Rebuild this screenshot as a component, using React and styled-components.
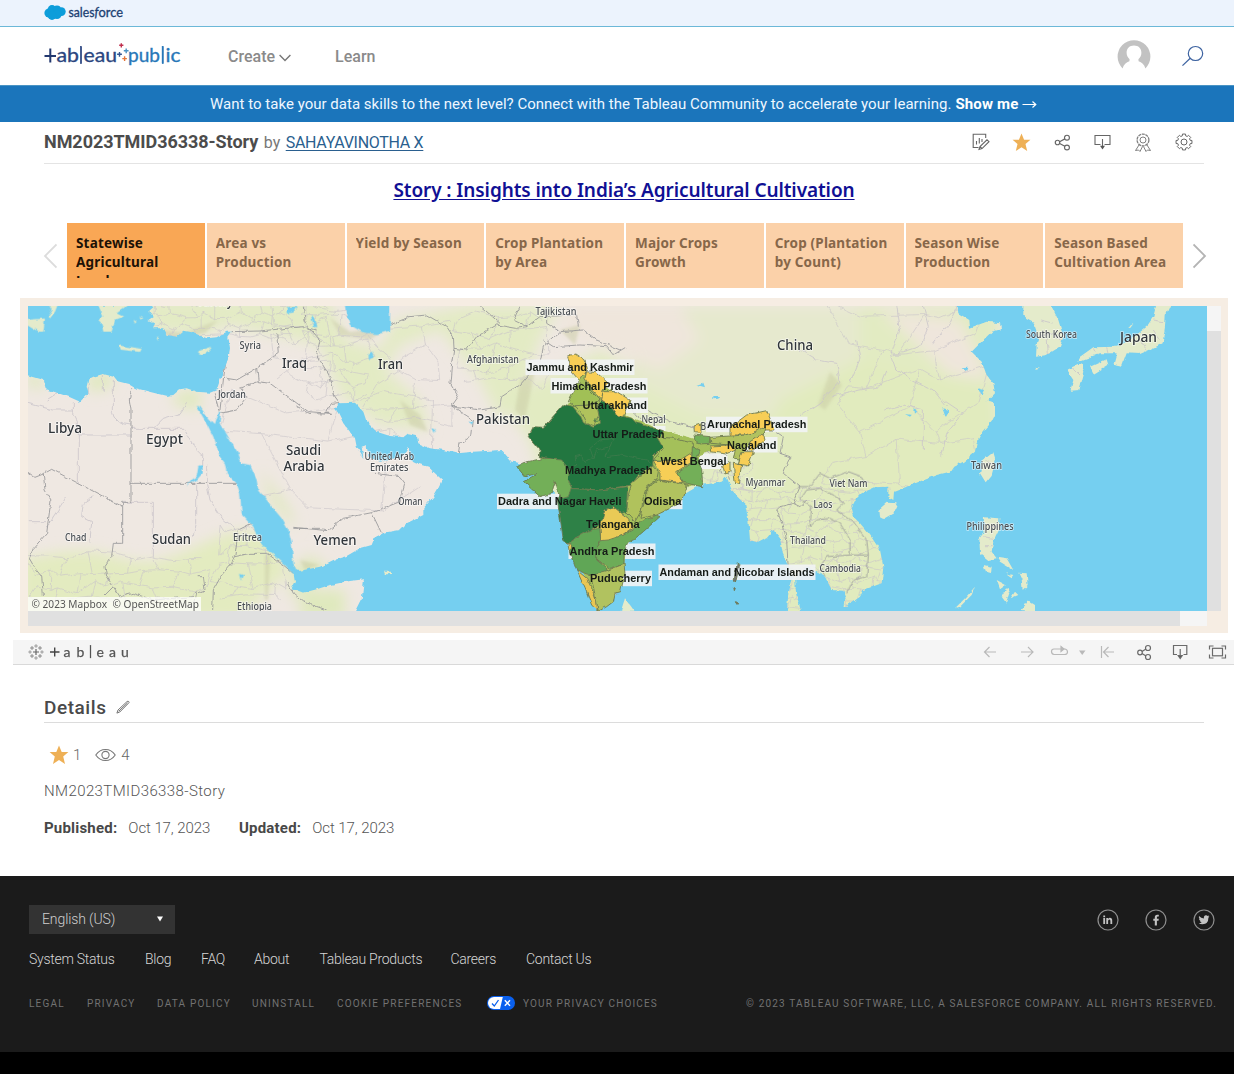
import React from 'react';
import styled, { createGlobalStyle } from 'styled-components';

const GlobalStyle = createGlobalStyle`
  *, *::before, *::after { box-sizing: border-box; }
  body { margin: 0; background: #fff; font-family: Roboto, "Liberation Sans", sans-serif; color: #666; }
  svg { display: block; flex: none; }
`;

const Page = styled.div`
  width: 1234px;
  height: 1074px;
  overflow: hidden;
  display: flex;
  flex-direction: column;
  white-space: nowrap;
`;

const BrandBar = styled.div`
  height: 27px;
  flex: none;
  padding: 0 0 0 44px;
  display: flex;
  align-items: center;
  background: #ecf3fd;
  border-bottom: 1px solid #6cb8d8;
`;

const NavBar = styled.header`
  height: 58px;
  flex: none;
  display: flex;
  align-items: center;
  padding: 0 30px 0 44px;
`;

const NavItem = styled.span`
  display: flex;
  align-items: center;
  gap: 4px;
  margin-left: ${(p) => p.$left}px;
  font-size: 16px;
  font-weight: 500;
  letter-spacing: ${(p) => p.$track || 0}px;
  color: #8a8a8a;
`;

const ChevronIcon = styled.svg`
  margin-top: 3px;
`;

const NavTools = styled.div`
  margin-left: auto;
  display: flex;
  align-items: center;
  gap: 31px;
`;

const Banner = styled.div`
  height: 37px;
  flex: none;
  display: flex;
  align-items: center;
  gap: 4px;
  padding: 0 0 1px 210px;
  background: #1b75bb;
  border-top: 1px solid #4a94c4;
  color: #eef7ff;
  font-size: 15px;
  letter-spacing: 0.02px;
  b { color: #fff; font-weight: 700; letter-spacing: 0.15px; }
`;

const TitleRow = styled.div`
  height: 42px;
  flex: none;
  margin: 0 30px 0 44px;
  border-bottom: 1px solid #e4e4e4;
  display: flex;
  align-items: center;
  justify-content: space-between;
  padding-bottom: 2px;
`;

const TitleText = styled.div`
  display: flex;
  align-items: baseline;
  gap: 5.500px;
  font-size: 16px;
  color: #777;
`;

const WorkbookName = styled.h1`
  margin: 0;
  font-size: 18px;
  font-weight: 700;
  color: #4c4c4c;
  letter-spacing: ${(p) => p.$track}px;
`;

const Author = styled.a`
  color: #2a5f8f;
  text-decoration: underline;
  text-underline-offset: 2px;
  letter-spacing: -0.3px;
`;

const Actions = styled.div`
  display: flex;
  align-items: center;
  margin-top: 1px;
`;

const Action = styled.span`
  width: 40.5px;
  display: flex;
  justify-content: center;
`;

const StoryTitle = styled.h2`
  margin: 0 0 0 14px;
  height: 59px;
  flex: none;
  display: flex;
  align-items: center;
  justify-content: center;
  padding-bottom: 7px;
  font: 600 19px "Noto Sans", "Open Sans", sans-serif;
  color: #101094;
  span { text-decoration: underline; text-underline-offset: 2px; letter-spacing: ${(p) => p.$track}px; }
`;

const StoryNav = styled.div`
  height: 65px;
  flex: none;
  padding: 0 27px 0 43px;
  display: flex;
  align-items: center;
  justify-content: space-between;
`;

const Points = styled.div`
  width: 1116px;
  height: 65px;
  display: grid;
  grid-template-columns: repeat(8, 1fr);
  gap: 2px;
`;

const Point = styled.div`
  height: 65px;
  padding: 11px 0 0 9px;
  overflow: hidden;
  background: ${(p) => (p.$active ? '#f9a755' : '#fbd1a9')};
  color: ${(p) => (p.$active ? '#1d1206' : '#876749')};
  font: 700 13.5px/19px "Noto Sans", "Open Sans", sans-serif;
  letter-spacing: ${(p) => p.$track}px;
`;

const PointText = styled.div`
  height: 44px;
  overflow: hidden;
`;

const VizFrame = styled.div`
  margin: 10px 6px 0 20px;
  height: 335px;
  flex: none;
  padding: 8px;
  background: #f6ede3;
  display: grid;
  grid-template-columns: 1179px 14px;
  grid-template-rows: 305px 15px;
`;

const ScrollTrack = styled.div`
  background: #f5f5f5;
  display: flex;
  flex-direction: ${(p) => (p.$vertical ? 'column' : 'row')};
  justify-content: ${(p) => (p.$vertical ? 'flex-end' : 'flex-start')};
`;

const ScrollThumb = styled.div`
  background: #e0e0e0;
  width: ${(p) => p.$w};
  height: ${(p) => p.$h};
`;

const VizToolbar = styled.div`
  margin: 7px 0 0 13px;
  height: 25px;
  flex: none;
  background: #f5f5f5;
  border-bottom: 1px solid #d9d9d9;
  display: flex;
  align-items: center;
  justify-content: space-between;
  padding: 0 6px 0 15px;
`;

const ToolIcons = styled.div`
  display: flex;
  align-items: center;
`;

const Details = styled.section`
  height: 211px;
  flex: none;
  margin: 0 30px 0 44px;
  padding-top: 28px;
`;

const DetailsHead = styled.div`
  height: 30px;
  padding-bottom: 1px;
  border-bottom: 1px solid #dcdcdc;
  display: flex;
  align-items: center;
  gap: 10px;
  color: #4a4a4a;
  font-size: 19px;
  font-weight: 500;
  letter-spacing: 0.55px;
`;

const Stats = styled.div`
  height: 64px;
  display: flex;
  align-items: center;
  padding-left: 5px;
  font-size: 15px;
  font-weight: 300;
  color: #666;
`;

const StatValue = styled.span`
  margin: 0 ${(p) => p.$after || 0}px 0 ${(p) => p.$before}px;
`;

const Description = styled.div`
  height: 20px;
  margin-top: -6px;
  line-height: 20px;
  font-size: 15px;
  font-weight: 300;
  letter-spacing: 0.4px;
  color: #555;
`;

const Dates = styled.div`
  margin-top: 17px;
  height: 20px;
  line-height: 20px;
  display: flex;
  font-size: 15px;
  font-weight: 300;
  letter-spacing: -0.08px;
  color: #555;
  b { font-weight: 700; color: #484848; margin-right: 11px; letter-spacing: 0.2px; }
`;

const DateItem = styled.span`
  width: ${(p) => p.$w}px;
`;

const Footer = styled.footer`
  height: 176px;
  flex: none;
  background: #1b1b1b;
  padding: 29px 17px 0 29px;
  color: #c4c4c4;
`;

const BottomStrip = styled.div`
  flex: 1;
  background: #000;
`;

const FooterTop = styled.div`
  display: flex;
  justify-content: space-between;
  align-items: center;
  padding-right: 2px;
`;

const Language = styled.div`
  width: 146px;
  height: 29px;
  background: #333;
  display: flex;
  align-items: center;
  justify-content: space-between;
  padding: 0 12px 1px 13px;
  font-size: 14px;
  font-weight: 300;
  letter-spacing: -0.1px;
  color: #cfcfcf;
`;

const Social = styled.div`
  display: flex;
  gap: 26px;
`;

const FooterLinks = styled.nav`
  display: flex;
  height: 50px;
  align-items: center;
  font-size: 14px;
  font-weight: 300;
  color: #d6d6d6;
`;

const FooterLink = styled.a`
  width: ${(p) => p.$w}px;
  flex: none;
  letter-spacing: ${(p) => p.$track || 0}px;
`;

const LegalRow = styled.div`
  display: flex;
  height: 38px;
  align-items: center;
  font-size: 10px;
  letter-spacing: 1.15px;
  color: #727272;
`;

const Copyright = styled.span`
  margin-left: auto;
  letter-spacing: ${(p) => p.$track}px;
`;

/* ---------- icons ---------- */

const SalesforceLogo = () => (
  <svg width="80" height="18" viewBox="0 0 80 18">
    <g fill="#0d9dda">
      <circle cx="5" cy="9" r="4.6" /><circle cx="8" cy="5.5" r="4.4" /><circle cx="13" cy="5.4" r="4" />
      <circle cx="17.4" cy="7.6" r="4.3" /><circle cx="13" cy="10.5" r="4.6" /><circle cx="8" cy="11.5" r="4.4" />
    </g>
    <g fontSize="12.5" fontFamily="Lato, sans-serif" fill="#1b3f72" stroke="#1b3f72" strokeWidth=".3">
      <text x="24.5" y="12.6" textLength="26" lengthAdjust="spacingAndGlyphs">sales</text>
      <text x="50.5" y="12.6" fontStyle="italic">f</text>
      <text x="54.5" y="12.6" textLength="24.5" lengthAdjust="spacingAndGlyphs">orce</text>
    </g>
  </svg>
);

const PlusMark = ({ x, y, r, c, w = 1.2 }) => (
  <path d={`M${x - r} ${y}H${x + r}M${x} ${y - r}V${y + r}`} stroke={c} strokeWidth={w} fill="none" />
);

const TableauPublicLogo = () => (
  <svg width="138" height="28" viewBox="44 42 138 28" fontFamily="Lato, sans-serif" fontSize="20">
    <path d="M44.5 56H56M50.3 48.5V62.5" stroke="#22386f" strokeWidth="2" fill="none" />
    <g fill="#2b4680" stroke="#2b4680" strokeWidth=".35">
      <text x="56.5" y="62.4" textLength="22.500" lengthAdjust="spacingAndGlyphs">ab</text>
      <rect x="80.2" y="46.3" width="1.6" height="17.5" />
      <text x="83.5" y="62.4" textLength="33.500" lengthAdjust="spacingAndGlyphs">eau</text>
    </g>
    <PlusMark x={119.5} y={54.3} r={2.4} c="#33548f" w={1.4} />
    <PlusMark x={121.3} y={45.3} r={2.1} c="#c0304f" w={1.4} />
    <PlusMark x={126.2} y={50.8} r={2.4} c="#4d93c4" w={1.4} />
    <PlusMark x={124.6} y={58.6} r={2.3} c="#e4763a" w={1.4} />
    <g fill="#2877b8" stroke="#2877b8" strokeWidth=".35">
      <text x="128" y="62.4" textLength="32" lengthAdjust="spacingAndGlyphs">pub</text>
      <rect x="162" y="46.3" width="1.6" height="17.5" />
      <text x="165.500" y="62.4" textLength="15" lengthAdjust="spacingAndGlyphs">ic</text>
    </g>
  </svg>
);

const Chevron = () => (
  <ChevronIcon width="12" height="8" viewBox="0 0 12 8"><path d="M.6 1L6 6.6 11.4 1" fill="none" stroke="#777" strokeWidth="1.4" /></ChevronIcon>
);

const Avatar = () => (
  <svg width="34" height="34" viewBox="0 0 34 34">
    <path d="M5.6 29.4A16.4 16.4 0 1 1 28.4 29.4C27.4 25.6 24.6 23.2 21.6 22.2 L21.4 20.2C23.4 18.6 24.4 16.4 24.4 13.8 24.4 9.4 21.4 6.6 17 6.6S9.600 9.4 9.600 13.800C9.600 16.4 10.600 18.6 12.6 20.2L12.400 22.2C9.4 23.2 6.600 25.600 5.600 29.400Z" fill="#c2c2c2" />
  </svg>
);

const SearchIcon = () => (
  <svg width="22" height="22" viewBox="0 0 22 22"><g fill="none" stroke="#3c62a0" strokeWidth="1.2"><ellipse cx="13.500" cy="8.5" rx="7.2" ry="7" /><path d="M8.200 13.300L.5 20.600" /></g></svg>
);

const EditChartIcon = () => (
  <svg width="18" height="18" viewBox="0 0 18 18" fill="none" stroke="#666" strokeWidth="1.1">
    <path d="M13.700 5V1.200H1.200V14.500H6.500M4.500 8V11.500M7.300 5V10.500M10 6V9" />
    <path d="M7 16.500L8 13.500 15 6.800 17 8.700 10 15.600Z M8 13.500L10 15.600" />
  </svg>
);

const StarIcon = ({ size }) => (
  <svg width={size} height={size} viewBox="0 0 20 20"><path d="M10 .6L12.700 7H19.400L14.200 11.500 16 19 10 14.900 4 19 5.800 11.500.6 7H7.300Z" fill="#eeb056" /></svg>
);

const ShareIcon = ({ size = 16, c = '#666' }) => (
  <svg width={size} height={size} viewBox="0 0 16 16" fill="none" stroke={c} strokeWidth="1.100">
    <circle cx="3.300" cy="8" r="2.100" /><circle cx="12.200" cy="3.500" r="2.300" /><circle cx="12.200" cy="12.700" r="2.300" />
    <path d="M5.300 7.200L10.200 4.600M5.300 8.900L10.200 11.600" />
  </svg>
);

const DownloadIcon = () => (
  <svg width="17" height="17" viewBox="0 0 17 17"><path d="M6.500 10.500H1V1.500H16V10.500H10.500M8.500 5V13" fill="none" stroke="#666" strokeWidth="1.100" /><path d="M6 11.800H11L8.500 15.400Z" fill="#555" /></svg>
);

const AwardIcon = () => (
  <svg width="18" height="19" viewBox="0 0 18 19" fill="none" stroke="#808080" strokeWidth="1">
    <circle cx="9" cy="7" r="3" /><circle cx="9" cy="7" r="5.900" strokeWidth="1.300" strokeDasharray="3 .7" />
    <path d="M5 12L1.500 17.500 4.500 17 6 18.500 8.500 13.500M13 12L16.500 17.500 13.500 17 12 18.500 9.500 13.500" />
  </svg>
);

const gearPath = (() => {
  const pts = [];
  for (let i = 0; i < 8; i += 1) {
    const a = (i * Math.PI) / 4 - Math.PI / 2;
    [[-0.26, 6.4], [-0.19, 8.1], [0.19, 8.1], [0.26, 6.4]].forEach(([d, r]) => {
      pts.push(`${(9 + r * Math.cos(a + d)).toFixed(2)} ${(9 + r * Math.sin(a + d)).toFixed(2)}`);
    });
  }
  return `M${pts.join('L')}Z`;
})();

const GearIcon = () => (
  <svg width="18" height="18" viewBox="0 0 18 18" fill="none" stroke="#666" strokeWidth="1"><path d={gearPath} strokeLinejoin="round" /><circle cx="9" cy="9" r="3" /></svg>
);

const ArrowSide = ({ right }) => (
  <svg width="14" height="26" viewBox="0 0 14 26"><path d={right ? 'M.5 1.500L12 13 .5 24.500' : 'M13.500 1.500L2 13 13.500 24.500'} fill="none" stroke={right ? '#b4b4b4' : '#dcdcdc'} strokeWidth="1.800" /></svg>
);

const TableauMark = () => (
  <svg width="104" height="18" viewBox="28 643 104 18" fontFamily="Lato, sans-serif" fontSize="14" fill="#555">
    <PlusMark x={36} y={652} r={3} c="#666" w={1.2} />
    <PlusMark x={36} y={646} r={1.800} c="#999" w={1} />
    <PlusMark x={36} y={658} r={1.800} c="#999" w={1} />
    <PlusMark x={30} y={652} r={1.700} c="#999" w={1} />
    <PlusMark x={42} y={652} r={1.700} c="#999" w={1} />
    <PlusMark x={32} y={648} r={1.900} c="#888" w={1} />
    <PlusMark x={40} y={648} r={1.900} c="#888" w={1} />
    <PlusMark x={32} y={656} r={1.900} c="#888" w={1} />
    <PlusMark x={40} y={656} r={1.900} c="#888" w={1} />
    <path d="M50 652H59.500M54.700 647.500V656.500" stroke="#444" strokeWidth="1.400" />
    <g stroke="#555" strokeWidth=".25">
      <text x="63.500" y="656.500">a</text><text x="76.500" y="656.500">b</text>
      <rect x="90" y="645.500" width="1" height="12.500" />
      <text x="96.500" y="656.500">e</text><text x="109" y="656.500">a</text><text x="121" y="656.500">u</text>
    </g>
  </svg>
);

const VizTools = () => (
  <svg width="246" height="22" viewBox="982 641 246 22" fill="none" stroke="#b9b9b9" strokeWidth="1.200">
    <path d="M996 652H984.500M989.500 647L984.500 652 989.500 657" />
    <path d="M1021 652H1033M1028 647L1033 652 1028 657" />
    <path d="M1064 649H1054Q1051.500 649 1051.500 651.500T1054 654.500H1064.500Q1067.500 654.500 1067.500 652T1065 649H1061" />
    <path d="M1061 646.500V651.500L1064 649Z" fill="#b9b9b9" />
    <path d="M1079 650.500H1085.500L1082.200 655Z" fill="#b9b9b9" stroke="none" />
    <path d="M1101.500 646V658M1114 652H1103.500M1108.500 647L1103.500 652 1108.500 657" />
    <g stroke="#6a6a6a">
      <circle cx="1140" cy="652.500" r="2.300" /><circle cx="1148" cy="648" r="2.500" /><circle cx="1148" cy="657" r="2.500" /><path d="M1142 651.500L1146 649M1142 653.500L1146 656" />
      <path d="M1177 654.500H1173.500V645.500H1186.800V654.500H1183.500M1180.200 649V657" /><path d="M1178.200 655.500H1182.200L1180.200 658.500Z" fill="#555" />
      <rect x="1212.500" y="648.300" width="10" height="7.500" />
      <path d="M1209.500 649.500V646H1213.500M1221.500 646H1225.500V649.500M1225.500 654.500V658H1221.500M1213.500 658H1209.500V654.500" />
    </g>
  </svg>
);

const PencilIcon = () => (
  <svg width="14" height="14" viewBox="0 0 14 14" fill="none" stroke="#777" strokeWidth="1"><path d="M.9 13.100L2 10 11 1.600Q12 .8 12.800 1.600T12.500 3.200L3.800 12ZM2.800 11.200L11.600 2.800" /></svg>
);

const EyeIcon = () => (
  <svg width="21" height="14" viewBox="0 0 21 14" fill="none" stroke="#777" strokeWidth="1.100"><path d="M.8 7Q4.500 1.500 10.500 1.500T20.200 7Q16.500 12.500 10.500 12.500T.8 7Z" /><circle cx="10.500" cy="7" r="3.600" /></svg>
);

const PrivacyIcon = () => (
  <svg width="28" height="14" viewBox="0 0 28 14">
    <rect width="28" height="14" rx="7" fill="#0a60ee" />
    <path d="M7 1H15.800L13 13H7A6 6 0 0 1 7 1Z" fill="#fff" />
    <path d="M5 7.500L7.300 10 11.500 4" fill="none" stroke="#0a60ee" strokeWidth="1.300" />
    <path d="M17.800 4.300L23 9.800M23 4.300L17.800 9.800" stroke="#fff" strokeWidth="1.400" />
  </svg>
);

const Ring = ({ children }) => (
  <svg width="22" height="22" viewBox="0 0 22 22"><circle cx="11" cy="11" r="10" fill="none" stroke="#8f8f8f" strokeWidth="1.200" /><g fill="#c2c2c2">{children}</g></svg>
);

/* ---------- map ---------- */

// Irregular brick lattice used for administrative subdivisions.
const lattice = (x0, y0, x1, y1, step, seed) => {
  const rnd = (i, j, k) => {
    const v = Math.sin(i * 127.1 + j * 311.7 + k * 74.7 + seed * 13.3) * 43758.5453;
    return v - Math.floor(v) - 0.5;
  };
  const at = (i, j) => [x0 + i * step + rnd(i, j, 1) * step * 0.85, y0 + j * step + rnd(i, j, 2) * step * 0.85];
  const nx = Math.floor((x1 - x0) / step);
  const ny = Math.floor((y1 - y0) / step);
  let d = '';
  for (let j = 0; j <= ny; j += 1) {
    for (let i = 0; i <= nx; i += 1) {
      const p = at(i, j).map((v) => v.toFixed(1)).join(' ');
      if (i < nx) d += `M${p}L${at(i + 1, j).map((v) => v.toFixed(1)).join(' ')}`;
      if (j < ny && (i + j) % 2 === 0) d += `M${p}L${at(i, j + 1).map((v) => v.toFixed(1)).join(' ')}`;
    }
  }
  return d;
};

const WEST = 'translate(20 300) scale(.33333)';
const MIDDLE = 'translate(300 300) scale(.33333)';
const INDIA = 'translate(500 340) scale(.33333)';
const EAST = 'translate(800 300) scale(.33333)';

const greens = [
  ['#e3ebc4', 'M145 300H330L345 340 380 350 395 320 470 306H560L540 340 520 400 500 420 480 380 440 330 400 345 385 370 420 400 430 430 380 425 340 395 320 345 230 325 200 336 150 330Z'],
  ['#e3ebc0', 'M20 560Q80 545 110 555T160 560 210 540 270 535L290 570 240 620H20Z'],
  ['#e2ebc2', 'M500 400L560 370 600 350 690 400 780 370 850 306H1000V480L900 500 890 620 760 620 700 520H640L560 540 530 440Z'],
  ['#e6e9ce', 'M640 306H860V420L700 415 630 380Z'],
  ['#e1ebbe', 'M780 400L860 360 990 390 1000 470 880 520 890 640H750L740 500Z'],
  ['#dfe9bd', 'M292 570L310 555 330 570 290 600ZM300 590H345V620H300ZM28 370L45 380 40 390 28 385ZM85 375L115 372 110 388 90 392ZM172 395L200 388 200 410 175 405ZM260 470L290 510 296 530 270 500Z'],
  ['#efe6dc', 'M570 306H680L700 340 660 370 600 345 560 330ZM880 310L960 320 990 380 950 375Z'],
];

const provinces = [
  lattice(150, 304, 300, 340, 11, 1), lattice(305, 306, 372, 400, 13, 2),
  lattice(372, 330, 450, 440, 24, 9), lattice(30, 555, 215, 612, 16, 3),
  lattice(215, 530, 290, 612, 18, 4), lattice(460, 315, 560, 385, 17, 5),
  lattice(740, 490, 890, 625, 10, 6), lattice(715, 450, 760, 520, 13, 10),
  lattice(835, 306, 1010, 500, 37, 7), lattice(270, 300, 345, 395, 20, 12),
  lattice(235, 400, 440, 530, 46, 11), lattice(660, 455, 730, 490, 12, 8),
];

const westProvinces = 'M280 240V340Q285 372 333 375M175 550V405H333M160 310V335L175 365V405M24 310L100 330 160 330M335 385H490L520 440 545 465V500M400 385L430 355 480 340 500 310M560 495V550L570 600 610 660 650 690M530 550V670L520 710M400 607V770M308 607H400M220 590L190 610 185 650 215 665 210 725M24 665H78M140 590L80 680M205 250V280M250 225V275M105 250L110 280 80 300';
const eastProvinces = 'M290 17L300 80 275 165 290 210 340 240 400 270 440 320M370 20L385 80 360 140 280 165M170 120L180 180 150 250M470 20L440 80 400 130M100 290L180 270 240 260 260 210M250 330L310 315 370 330 370 450M430 300L490 340 440 400 425 470M0 150L50 180 110 190 120 240 60 310 0 350';

const westBorders = 'M335 265L328 300 333 330V607H308V620L95 508 70 522 45 532 24 517M70 522L75 570 93 600 80 700 40 745 28 775 45 805 65 830 70 885M308 620V730H280L275 770 255 800 260 830 280 860 250 890M333 550H652M695 670L655 690 645 765 635 790 605 825 580 870 578 930M645 770L690 760 740 760 790 795 820 820M805 850L820 880 850 905 920 930M520 930L530 880 555 870 550 830 530 830M280 860L300 890 340 880 400 900 520 890M635 95L720 93 800 85 850 80 890 90M770 100L775 160 710 205 650 240 620 235M710 205L715 245 660 265 680 290 650 330 600 340M715 245L750 250 865 335 930 340M620 165L610 240 600 330M583 280L598 335M820 685L900 685';
const middleBorders = 'M10 17L15 60 25 80 60 120 50 165 90 230 105 290 120 310M-10 320L25 340 95 343 75 340 95 310 115 308M270 75L330 50 380 45 440 80 460 110 462 145 500 150 530 110 590 75 650 85 680 80M462 145L455 190 450 250 475 290 455 318 520 360 515 405 480 430 475 460M455 318L540 330 600 320 605 290 660 255 690 220 720 190 730 140 780 95 850 90 890 120 960 150M740 20V70L780 95M680 80L640 60 660 20M680 80L720 50 830 45 835 80M-20 682L85 692 130 655 215 638 245 700M215 638L300 605 315 550 300 530 225 520M540 17L600 70';
const indiaBorders = 'M390 185L450 215 510 245 580 260 620 255M395 210L470 290 580 300M820 270L850 290 840 340 870 350 850 400 900 440 880 490 840 500 830 510 850 560 860 600 865 690 880 710M130 0L160 20 240 15 320 20 340 45 380 20M605 330L650 350 665 400M665 345L690 420M880 490L900 500 920 480';
const eastBorders = 'M-10 560L30 560 60 520 90 535 145 515 185 530 200 560M0 600L20 570 60 565 110 590 130 610 110 630 160 665 200 720 205 765 150 765V720L120 670 90 655 50 660 30 680 35 620 5 600M150 765L80 770 60 800 75 830M205 765L200 830 160 840 140 880';

const relief = ['M150 328L185 333 218 320 205 333 175 340ZM330 318L350 332 390 325 370 340 340 335Z', 'M830 372L842 385 825 410 818 405Z', 'M400 400L420 415 428 432 410 425ZM520 380L535 370 525 420 515 410ZM560 330L580 325 575 345Z', 'M265 555V600L268 600 270 555ZM300 560L320 565 305 570Z'];

const seas = [
  [WEST, 'M20 12H385L400 25 388 35 400 50 385 60 405 70 400 85 430 85 440 105 470 110 490 92 520 98 560 115 590 112 620 95 635 95 625 110 630 145 625 175 610 215 600 240 590 270 570 278 530 275 500 265 480 268 460 285 440 288 400 278 345 264 325 252 290 243 280 230 250 222 220 230 205 238 200 260 205 280 180 305 150 292 80 268 72 240 20 225Z'],
  [WEST, 'M530 318L540 320 565 355 585 375 600 370 610 385 630 420 655 460 665 490 690 495 710 540 715 570 740 600 760 625 785 655 805 690 815 730 820 790 832 815 820 822 790 790 760 765 735 745 715 720 700 680 665 640 660 580 650 550 620 520 615 490 600 470 580 410 560 370 545 345ZM585 375L597 335H603L598 372ZM500 560L515 540 530 530 535 500 548 498V520L530 540 510 550ZM660 822L672 825 665 842ZM800 25L830 20 820 38 800 40ZM872 45L885 55 892 80 882 82Z'],
  [MIDDLE, 'M-20 812L0 812 60 800 100 780 140 768 180 745 215 735 225 710 250 698 300 690 320 670 370 645V625L400 590 415 565 427 540 400 515 385 500 350 490 330 480V440L320 455 300 475 240 485 205 470 200 435 185 440 190 475 170 440 165 415 130 370 115 340 105 325 120 310 165 308 190 335 200 365 230 395 270 408 310 412 325 400 350 405 355 430 390 445 430 450 470 460 520 455 605 450 635 485 655 488 700 500 780 600 810 720 840 790 900 940H165L185 900 192 838 150 843 90 855 50 868 10 878 -25 865 -15 845Z'],
  [MIDDLE, 'M133 10H270V92L235 102 190 98 150 75 140 50ZM205 165L215 158 222 172 208 178ZM505 362L520 365 515 374ZM395 385L408 388 400 398Z'],
  [INDIA, 'M290 822L350 760 365 680 390 600 470 530 540 470 600 435 640 430 665 425 680 410 695 450 735 490 745 540 750 600 775 608 800 595 820 570 840 595 848 640 865 680 880 710 865 760 860 822ZM592 135L610 128 615 142ZM640 168L660 168 655 176 640 178Z'],
  [EAST, 'M5 940L-12 880 -15 830 20 800 75 830 85 850 95 870 130 872 140 895 130 920 145 915 180 890 190 870 245 850 250 800 240 750 210 705 180 670 160 650 152 625 165 600 185 580 225 562 265 560 265 590 280 600 282 575 320 560 370 540 410 525 450 515 460 500 490 485 525 455 530 430 550 395 575 365 585 345V310L560 305 585 280 580 250 560 225 545 185 515 155 540 130 575 95 603 88 600 70 560 65 510 83 508 60 475 40 472 10H1230V940ZM485 205L505 203 500 216ZM535 265L552 270 545 284ZM427 325L445 330 438 355ZM315 342L335 345 330 350ZM343 325L353 330 345 345Z'],
];

const islands = [
  [WEST, 'M20 60L75 55 70 95 58 95 20 72ZM88 17H112L105 35 90 55 84 48 95 30ZM235 17H320L290 40 310 50 285 60 275 95 250 95 245 70 235 60 250 50ZM298 136L365 147 360 156 302 149ZM530 155L577 140 565 155 540 165ZM410 115L418 108 414 122ZM340 60L350 65 345 70ZM360 48L370 55 360 58Z'],
  [MIDDLE, 'M255 815L276 815 276 822 258 823Z'],
  [INDIA, 'M375 775L405 815H362Z'],
  [EAST, 'M670 10H750L775 60 790 110 780 140 740 165 708 170 710 135 715 110 700 65 680 55 670 45ZM1070 10H1113L1097 45 1095 80 1088 130 1060 145 1020 162 980 160 965 200 940 195 950 160 900 160 832 185 840 170 880 142 950 140 990 120 1040 80 1060 50ZM870 200L920 178 925 195 880 222ZM800 210L845 190 853 215 838 270 812 272 820 240ZM580 457L587 480 575 525 557 547 540 520 550 480ZM235 630L260 608 293 610 280 640 250 657 237 650ZM552 652L598 655 597 690 580 725 575 755 590 775 565 780 540 760 538 715 550 700ZM550 795L575 800 573 822 558 818ZM590 770L620 775 640 810 600 785ZM655 818L680 820 683 855 668 870 665 840ZM590 840L618 855 600 868ZM605 890L622 862 628 880 618 908ZM632 895L645 875 655 885ZM665 930L685 902 705 915 705 935ZM465 925L495 895 525 860 515 885 480 920ZM985 80L1000 72 990 85ZM706 203L720 206 708 209ZM618 820L640 825 635 832Z'],
];

const islandProvinces = 'M720 60L760 70M715 110L750 100 785 120M740 100L745 160M880 145L890 165M920 142L925 160M1060 60L1090 65M1020 120L1040 150M1060 90L1080 120M820 205L840 225M560 680H595M550 710L580 715M555 740H575M560 480L575 500';

const D = '#21763f';
const Y = '#f7ce57';
const L = '#b1c25e';
const indiaOutline = 'M210 60L255 100 330 150 390 185 375 225 490 272 590 298 690 290 690 330 640 330 600 345 602 430 560 440 520 500 470 525 380 605 372 680 350 755 300 805 280 760 215 630 180 530 178 450 140 380 120 350 120 300 200 200 240 130Z';
const states = [
  [D, 'M192 193L218 200 240 225 250 248 280 262 298 250 296 220 290 205 305 180 330 195 350 225 395 235 410 250 490 272 480 290 490 320 460 350 458 375 430 400 415 405 395 435 300 450 210 445 200 430 205 385 160 358 118 350 120 330 85 290 100 260 130 262Z'],
  ['#2d8147', 'M200 445L300 450 383 440 380 490 385 515 365 520 340 500 315 515 305 550 270 570 215 600 205 612 190 600 180 530 172 480 178 460Z'],
  ['#73af58', 'M50 380L70 368 130 355 185 360 208 390 205 420 215 440 205 470 180 478 175 455 168 430 165 425 155 460 120 470 70 425 105 405 110 400 75 410Z'],
  ['#60a657', 'M215 600L270 570 300 565 302 600 290 620 300 640 290 660 325 690 300 700 270 705 255 700 230 690 212 640 208 610Z'],
  ['#6dac58', 'M302 600L370 585 400 570 425 545 470 525 480 530 430 575 400 600 385 605 372 640 372 672 330 685 290 660 290 620Z'],
  ['#e9ca57', 'M315 510L340 500 365 520 385 535 400 565 370 585 325 600 302 602 300 560Z'],
  [L, 'M270 705L325 690 372 672 375 700 362 755 345 760 340 785 320 800 295 814 290 790 280 740Z'],
  ['#e9c653', 'M230 690L260 715 275 745 290 785 293 814 275 795 255 745ZM203 610L215 615 213 635 207 630Z'],
  ['#b0c25c', 'M458 375L475 395 470 420 440 440 430 470 425 510 405 545 395 530 380 515 385 465 395 430 430 400Z'],
  [L, 'M475 420L540 430 562 435 550 475 520 500 470 525 420 535 425 510 440 470 440 445Z'],
  ['#a4c05a', 'M470 290L520 295 580 310 580 345 540 362 460 360 490 325Z'],
  [Y, 'M460 362L540 360 575 338 578 365 545 385 530 395 548 428 520 425 480 420 480 395Z'],
  ['#73af58', 'M577 320L600 330 590 350 605 385 608 440 580 435 550 428 530 400 575 370ZM582 285L630 290 628 310 600 312 585 300Z'],
  [Y, 'M582 258L603 252 603 280 583 278Z'],
  ['#a1c056', 'M205 185L235 125 260 140 285 165 300 180 270 195 225 200Z'],
  ['#b0c25c', 'M225 197L270 195 290 190 298 235 290 230 283 258 260 248 250 225Z'],
  [Y, 'M202 48L225 42 255 62 262 85 255 105 235 118 215 95 210 70Z'],
  [Y, 'M260 95L290 98 325 130 310 150 305 180 275 150 255 115Z'],
  [Y, 'M310 155L350 155 390 180 375 225 350 228 335 200 305 180Z'],
  [Y, 'M690 262L740 225 800 212 810 235 822 270 790 270 740 285 690 285Z'],
  [L, 'M630 292L690 288 740 285 795 262 790 280 745 310 720 360 700 358 705 335 690 315 632 310Z'],
  [Y, 'M630 318L690 315 708 330 680 342 632 335ZM750 305L790 280 795 300 760 330 745 330ZM725 335L760 335 745 378 715 372ZM700 370L725 375 715 430 705 425ZM668 375L690 365 690 395 675 402Z'],
  ['#777', 'M712 668L718 680 708 722 702 720ZM698 742L703 745 700 752ZM706 785L713 787 709 793Z'],
];

const countries = [
  ['Libya', 48, 433, 34, 13.5], ['Egypt', 146, 444, 37, 13.5], ['Sudan', 152, 543.500, 39, 13.5], ['Iraq', 282, 367.500, 25, 13.5],
  ['Iran', 378, 369, 25, 13.5], ['Saudi', 286, 455, 35, 13.5], ['Arabia', 283.500, 471, 41, 13.5], ['Yemen', 313.500, 545, 43, 13.5],
  ['Pakistan', 476, 423.500, 54, 13.5], ['China', 777, 349.500, 36, 13.5], ['Japan', 1120, 341.500, 37, 13.5],
  ['Syria', 239.500, 348.500, 21.500, 9.8], ['Jordan', 218, 398, 28, 9.8], ['Chad', 65, 541, 21.500, 9.8], ['Eritrea', 233, 541, 29, 9.8],
  ['Ethiopia', 237, 610, 35, 9.8], ['Oman', 398, 505, 24.500, 9.8], ['United Arab', 364.500, 460, 49.500, 9.8], ['Emirates', 370, 471, 38.500, 9.8],
  ['Afghanistan', 467, 362.500, 52, 9.8], ['Tajikistan', 535.500, 314.500, 41, 9.8], ['Nepal', 641.500, 423, 24, 9.8], ['Myanmar', 745.500, 486, 40, 9.8],
  ['South Korea', 1026, 337.500, 51, 9.8], ['Taiwan', 971, 468.500, 31, 9.8], ['Viet Nam', 829.500, 487, 38, 9.8], ['Laos', 813.500, 507.500, 19, 9.8],
  ['Thailand', 790, 544, 36, 9.8], ['Cambodia', 819.500, 571.500, 41.500, 9.8], ['Philippines', 966.500, 530, 47, 9.8], ['Bhutan', 700.500, 430, 30, 9.8],
  ['Turkey', 197, 306, 36, 13.5],
];

const stateLabels = [
  ['Jammu and Kashmir', 526.500, 371, 107], ['Himachal Pradesh', 551.500, 389.500, 95], ['Uttarakhand', 582.500, 409, 64.500],
  ['Uttar Pradesh', 592.500, 437.500, 72], ['Arunachal Pradesh', 707, 428.200, 99.500], ['Nagaland', 727, 448.500, 49.500],
  ['West Bengal', 660.500, 465, 66], ['Madhya Pradesh', 565, 474, 87.500], ['Dadra and Nagar Haveli', 498, 505.200, 123.500],
  ['Odisha', 644, 505.200, 37.500], ['Telangana', 586, 528.200, 53.500], ['Andhra Pradesh', 569.500, 555, 85],
  ['Puducherry', 590, 582.200, 61], ['Andaman and Nicobar Islands', 659.500, 576, 155],
];

const CountryLabel = styled.text`
  font-family: "Noto Sans", "Open Sans", sans-serif;
  font-size: ${(p) => p.$size}px;
  font-weight: 500;
  fill: ${(p) => (p.$size > 10 ? '#30353a' : '#484d52')};
  stroke: rgba(255, 255, 255, 0.6);
  stroke-width: 1.6px;
  paint-order: stroke;
`;

const Attribution = styled.text`
  font: 400 10px "Noto Sans", "Open Sans", sans-serif;
  fill: #555;
`;

const StateLabel = styled.text`
  font: 700 11.6px "Liberation Sans", Arial, sans-serif;
  fill: #151b17;
`;

const MapView = () => (
  <svg width="1179" height="305" viewBox="28 306 1179 305">
    <defs>
      <filter id="soft" x="-10%" y="-10%" width="120%" height="120%"><feGaussianBlur stdDeviation="7" /></filter>
      <filter id="hill" x="-20%" y="-20%" width="140%" height="140%"><feGaussianBlur stdDeviation="1.500" /></filter>
      <filter id="rough" filterUnits="userSpaceOnUse" x="0" y="280" width="1234" height="360">
        <feTurbulence type="fractalNoise" baseFrequency=".11" numOctaves="2" seed="4" result="n" />
        <feDisplacementMap in="SourceGraphic" in2="n" scale="6" xChannelSelector="R" yChannelSelector="G" />
      </filter>
      <filter id="rough2" filterUnits="userSpaceOnUse" x="0" y="280" width="1234" height="360">
        <feTurbulence type="fractalNoise" baseFrequency=".16" numOctaves="2" seed="8" result="n" />
        <feDisplacementMap in="SourceGraphic" in2="n" scale="4" xChannelSelector="R" yChannelSelector="G" />
      </filter>
    </defs>
    <rect x="28" y="306" width="1179" height="305" fill="#efe8e2" />
    <g filter="url(#soft)">{greens.map(([c, d]) => <path key={d} d={d} fill={c} />)}</g>
    <g filter="url(#hill)" fill="#c9cba4" opacity=".5">{relief.map((d) => <path key={d} d={d} />)}</g>
    <g filter="url(#rough)" fill="none">
      <g stroke="#c9c4ca" strokeWidth=".8">
        {provinces.map((d) => <path key={d.slice(0, 40)} d={d} opacity=".75" />)}
        <path transform={WEST} d={westProvinces} strokeWidth="2.400" />
        <path transform={EAST} d={eastProvinces} strokeWidth="2.400" />
      </g>
    </g>
    <g filter="url(#rough2)" fill="none" stroke="#98989a" strokeWidth="2.600">
      <path transform={WEST} d={westBorders} /><path transform={MIDDLE} d={middleBorders} />
      <path transform={INDIA} d={indiaBorders} /><path transform={EAST} d={eastBorders} />
    </g>
    <g filter="url(#rough2)">
      <g fill="#75cff0">{seas.map(([t, d]) => <path key={d} transform={t} d={d} />)}</g>
      <g fill="#e4ebcb">{islands.map(([t, d]) => <path key={d} transform={t} d={d} />)}</g>
      <path transform={EAST} d={islandProvinces} fill="none" stroke="#c9c4ca" strokeWidth="2.400" />
    </g>
    {countries.map(([t, x, y, w, s]) => <CountryLabel key={t} x={x} y={y} textLength={w} lengthAdjust="spacingAndGlyphs" $size={s}>{t}</CountryLabel>)}
    {stateLabels.map(([t, x, y, w]) => <rect key={t} x={x - 1} y={y - 11.500} width={w + 2} height="15.500" fill="#f1f3f4" opacity=".92" />)}
    <g filter="url(#rough2)">
      <g transform={INDIA} stroke="#6c7850" strokeWidth="2.600" strokeLinejoin="round">
        <path d={indiaOutline} fill="#a4c05a" stroke="none" />
        {states.map(([c, d]) => <path key={d} d={d} fill={c} />)}
        <path d="M205 385L230 375 225 350 245 345 250 365 280 355 270 325 300 300 340 295 330 320 315 350 360 345 440 360 458 375M280 355L290 330 330 320M285 235A6 6 0 1 0 296 237" fill="none" stroke="#3c7a4b" />
      </g>
    </g>
    {stateLabels.map(([t, x, y, w]) => <StateLabel key={t} x={x} y={y} textLength={w} lengthAdjust="spacingAndGlyphs">{t}</StateLabel>)}
    <rect x="28" y="597" width="173" height="14" fill="#fff" opacity=".75" />
    <Attribution x="31.500" y="607.500" textLength="75.500" lengthAdjust="spacingAndGlyphs">© 2023 Mapbox</Attribution>
    <Attribution x="112.500" y="607.500" textLength="86.500" lengthAdjust="spacingAndGlyphs">© OpenStreetMap</Attribution>
  </svg>
);

const points = [
  ['Statewise', 'Agricultural', 'Land'], ['Area vs', 'Production'], ['Yield by Season'], ['Crop Plantation', 'by Area'],
  ['Major Crops', 'Growth'], ['Crop (Plantation', 'by Count)'], ['Season Wise', 'Production'], ['Season Based', 'Cultivation Area'],
];

const footerLinks = [['System Status', 116], ['Blog', 56], ['FAQ', 53], ['About', 65.5], ['Tableau Products', 131], ['Careers', 75.5], ['Contact Us', 70]];
const legalLinks = [['LEGAL', 58], ['PRIVACY', 70], ['DATA POLICY', 95], ['UNINSTALL', 85], ['COOKIE PREFERENCES', 150]];

export default function App() {
  return (
    <Page>
      <GlobalStyle />
      <BrandBar><SalesforceLogo /></BrandBar>
      <NavBar>
        <TableauPublicLogo />
        <NavItem $left={46}>Create<Chevron /></NavItem>
        <NavItem $left={44}>Learn</NavItem>
        <NavTools><Avatar /><SearchIcon /></NavTools>
      </NavBar>
      <Banner>
        <span>Want to take your data skills to the next level? Connect with the Tableau Community to accelerate your learning.</span>
        <b>Show me</b>
        <svg width="15" height="8" viewBox="0 0 15 8"><path d="M.5 4.500H13.500M10.500 1.500L13.800 4.500 10.500 7.500" fill="none" stroke="#fff" strokeWidth="1.200" /></svg>
      </Banner>
      <TitleRow>
        <TitleText>
          <WorkbookName $track={-0.05}>NM2023TMID36338-Story</WorkbookName>
          <span>by</span>
          <Author>SAHAYAVINOTHA X</Author>
        </TitleText>
        <Actions>
          <Action><EditChartIcon /></Action>
          <Action><StarIcon size={19} /></Action>
          <Action><ShareIcon size={17} /></Action>
          <Action><DownloadIcon /></Action>
          <Action><AwardIcon /></Action>
          <Action><GearIcon /></Action>
        </Actions>
      </TitleRow>
      <StoryTitle $track={-0.09}><span>Story : Insights into India’s Agricultural Cultivation</span></StoryTitle>
      <StoryNav>
        <ArrowSide />
        <Points>
          {points.map((lines, i) => (
            <Point key={lines.join()} $active={i === 0} $track={0.18}>
              <PointText>{lines.map((l) => <div key={l}>{l}</div>)}</PointText>
            </Point>
          ))}
        </Points>
        <ArrowSide right />
      </StoryNav>
      <VizFrame>
        <MapView />
        <ScrollTrack $vertical><ScrollThumb $w="14px" $h="280px" /></ScrollTrack>
        <ScrollTrack><ScrollThumb $w="1152px" $h="15px" /></ScrollTrack>
      </VizFrame>
      <VizToolbar>
        <TableauMark />
        <ToolIcons><VizTools /></ToolIcons>
      </VizToolbar>
      <Details>
        <DetailsHead>Details<PencilIcon /></DetailsHead>
        <Stats>
          <StarIcon size={20} />
          <StatValue $before={4} $after={14}>1</StatValue>
          <EyeIcon />
          <StatValue $before={5}>4</StatValue>
        </Stats>
        <Description>NM2023TMID36338-Story</Description>
        <Dates>
          <DateItem $w={195}><b>Published:</b>Oct 17, 2023</DateItem>
          <DateItem $w={160}><b>Updated:</b>Oct 17, 2023</DateItem>
        </Dates>
      </Details>
      <Footer>
        <FooterTop>
          <Language>English (US)<svg width="6" height="6" viewBox="0 0 6 6"><path d="M0 .5H6L3 5.500Z" fill="#fff" /></svg></Language>
          <Social>
            <Ring><path d="M6.300 9H8.100V15H6.300ZM6.300 6.500H8.100V8.200H6.300ZM9.300 9H11V9.900Q11.600 8.800 13 8.800 15.200 8.800 15.200 11.500V15H13.400V11.900Q13.400 10.400 12.400 10.400 11.100 10.400 11.100 12V15H9.300Z" /></Ring>
            <Ring><path d="M9.800 16.500V11.700H8.300V9.700H9.800V8.300Q9.800 5.700 12.200 5.700H13.800V7.600H12.800Q11.900 7.600 11.900 8.500V9.700H13.800L13.500 11.700H11.900V16.500Z" /></Ring>
            <Ring><path d="M6 7Q8 9.300 10.900 9.400 10.500 6.500 13 6.300 14 6.300 14.700 7L16 6.500 15.400 7.800 16.400 7.500 15.400 8.700Q15.400 15 9.500 15.200 7.300 15.200 5.700 14.200 7.600 14.200 8.700 13.300 7.200 13 6.800 11.800H7.600Q6 11.300 6 9.600L6.800 9.800Q5.300 8.500 6 7Z" /></Ring>
          </Social>
        </FooterTop>
        <FooterLinks>{footerLinks.map(([t, w]) => <FooterLink key={t} $w={w} $track={-0.28}>{t}</FooterLink>)}</FooterLinks>
        <LegalRow>
          {legalLinks.map(([t, w]) => <FooterLink key={t} $w={w} $track={1.2}>{t}</FooterLink>)}
          <FooterLink $w={36}><PrivacyIcon /></FooterLink>
          <span>YOUR PRIVACY CHOICES</span>
          <Copyright $track={1.16}>© 2023 TABLEAU SOFTWARE, LLC, A SALESFORCE COMPANY. ALL RIGHTS RESERVED.</Copyright>
        </LegalRow>
      </Footer>
      <BottomStrip />
    </Page>
  );
}
